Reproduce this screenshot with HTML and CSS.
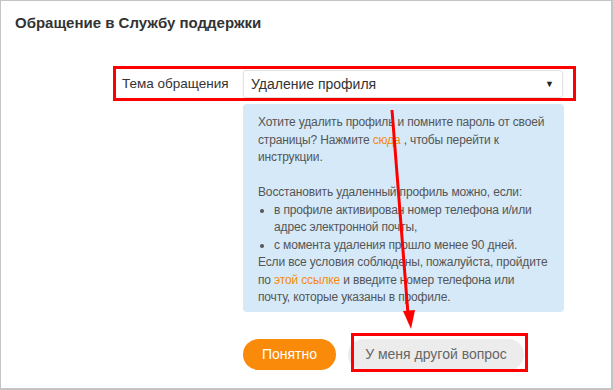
FILE: index.html
```html
<!DOCTYPE html>
<html lang="ru">
<head>
    <meta charset="UTF-8">
    <meta name="viewport" content="width=device-width, initial-scale=1.0">
    <title>Обращение в Службу поддержки</title>
    <link rel="stylesheet" href="styles.css">
</head>
<body>
    <div id="support-window">
        <h2 id="support-title">Обращение в Службу поддержки</h2>
        <div id="support-form">
            <div class="field-row">
                <label class="field-label">Тема обращения</label>
                <div class="fake-select">
                    <span>Удаление профиля</span>
                    <span class="select-arrow">&#9660;</span>
                </div>
            </div>
            <div class="form-body">
                <div class="info-box">
                    <p>Хотите удалить профиль и помните пароль от своей страницы? Нажмите <a href="#">сюда</a> , чтобы перейти к инструкции.</p>
                    <p class="gap">Восстановить удаленный профиль можно, если:</p>
                    <ul>
                        <li>в профиле активирован номер телефона и/или адрес электронной почты,</li>
                        <li>с момента удаления прошло менее 90 дней.</li>
                    </ul>
                    <p>Если все условия соблюдены, пожалуйста, пройдите по <a href="#">этой ссылке</a> и введите номер телефона или<br>почту, которые указаны в профиле.</p>
                </div>
                <div class="buttons">
                    <button class="btn btn-ok">Понятно</button>
                    <button class="btn btn-other">У меня другой вопрос</button>
                </div>
            </div>
        </div>
        <!-- annotation arrow -->
        <svg class="arrow" width="613" height="390" viewBox="0 0 613 390">
            <line x1="392" y1="110" x2="408" y2="314" stroke="#ff0000" stroke-width="3"/>
            <polygon points="403,311 415,310 411,329" fill="#ff0000"/>
        </svg>
    </div>
</body>
</html>
```

FILE: styles.css
```css
body {
    margin: 0;
    font-family: "Liberation Sans", Arial, sans-serif;
}

#support-window {
    position: relative;
    width: 613px;
    height: 390px;
    box-sizing: border-box;
    border: 1px solid #c4c4c4;
    border-right-width: 2px;
    border-bottom-width: 2px;
    background: #fff;
}

#support-title {
    margin: 13px 0 0 14px;
    font-size: 15px;
    font-weight: bold;
    color: #333;
}

#support-form {
    margin: 35px 0 0 112px;
}

.field-row {
    display: flex;
    align-items: center;
    width: 463px;
    height: 35px;
    box-sizing: border-box;
    border: 3px solid #ff0000;
    padding-left: 6px;
}

.field-label {
    width: 121px;
    font-size: 13.5px;
    color: #333;
}

.fake-select {
    display: flex;
    align-items: center;
    justify-content: space-between;
    width: 320px;
    height: 28px;
    box-sizing: border-box;
    padding: 0 8px 0 7px;
    border: 1px solid #e2e2e2;
    border-radius: 3px;
    box-shadow: 0 1px 2px rgba(0, 0, 0, 0.08);
    font-size: 14px;
    color: #333;
}

.select-arrow {
    font-size: 9px;
    color: #222;
}

.form-body {
    margin: 3px 0 0 130px;
    width: 321px;
}

.info-box {
    background: #d5e9f8;
    border-radius: 4px;
    padding: 10px 12px 5px 15px;
    font-size: 12px;
    letter-spacing: -0.15px;
    line-height: 17.5px;
    color: #555;
}

.info-box p {
    margin: 0;
}

.info-box p.gap {
    margin-top: 17.5px;
}

.info-box ul {
    margin: 0;
    padding-left: 16px;
}

.info-box a {
    color: #f7890f;
    text-decoration: none;
}

.buttons {
    display: flex;
    gap: 12px;
    margin-top: 27px;
}

.btn {
    height: 31px;
    border: none;
    border-radius: 16px;
    font-family: "Liberation Sans", Arial, sans-serif;
    font-size: 14px;
    cursor: pointer;
}

.btn-ok {
    width: 93px;
    background: #f98a0a;
    color: #fff;
}

.btn-other {
    position: relative;
    width: 176px;
    background: #ececec;
    color: #666;
}

/* red annotation frame */
.btn-other::after {
    content: '';
    position: absolute;
    top: -6px;
    left: 3px;
    width: 177px;
    height: 39px;
    box-sizing: border-box;
    border: 3px solid #ff0000;
}

.arrow {
    position: absolute;
    top: -1px;
    left: -1px;
    pointer-events: none;
}
```
